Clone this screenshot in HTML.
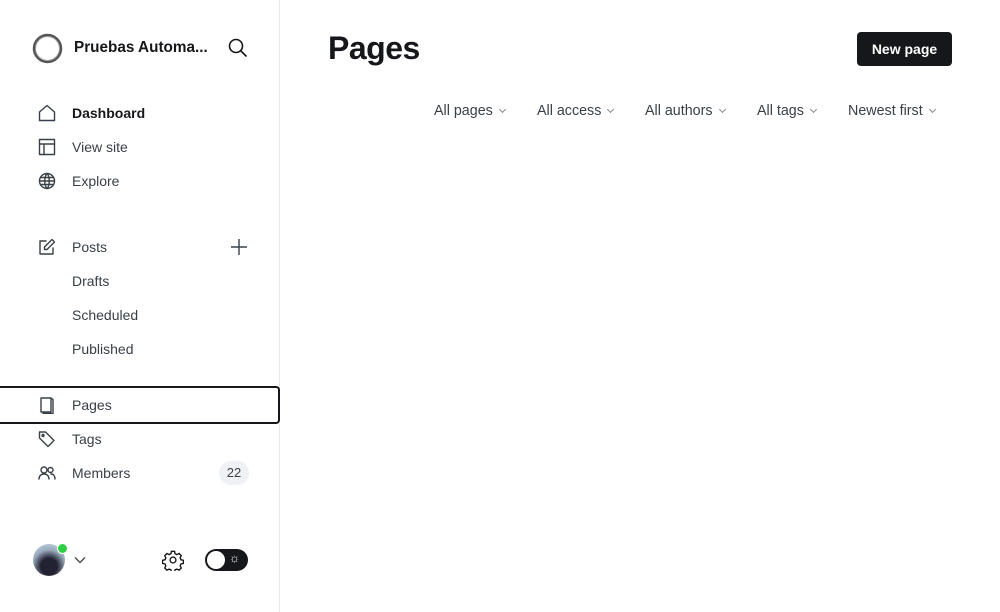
<!DOCTYPE html>
<html><head><meta charset="utf-8"><style>
*{margin:0;padding:0;box-sizing:border-box}
body{width:1000px;height:612px;background:#fff;font-family:"Liberation Sans",sans-serif;position:relative;overflow:hidden;color:#15171a}
.side{position:absolute;left:0;top:0;width:280px;height:612px;border-right:1px solid #e6e8eb}
.t{position:absolute;font-size:14px;color:#394047;white-space:nowrap}
.ic{position:absolute;width:18px;height:18px}
.ic svg{width:18px;height:18px;fill:none;stroke:#394047;stroke-width:1.4;stroke-linecap:round;stroke-linejoin:round}
.f{position:absolute;top:103px;font-size:14.3px;color:#394047;white-space:nowrap}
.f:after{content:"";display:inline-block;width:4px;height:4px;border-right:1px solid #888;border-bottom:1px solid #888;transform:rotate(45deg);margin-left:7px;vertical-align:3px}
</style></head><body>
<div class="side">
<svg style="position:absolute;left:32px;top:33px" width="31" height="31" viewBox="0 0 31 31"><circle cx="15.5" cy="15.5" r="13.5" fill="none" stroke="#555" stroke-width="2.5"/><circle cx="15.5" cy="15.5" r="12" fill="none" stroke="#999" stroke-width="1"/></svg>
<div class="t" style="left:74px;top:39px;font-weight:bold;font-size:15.3px;color:#15171a">Pruebas Automa...</div>
<svg style="position:absolute;left:228px;top:38px" width="20" height="20" viewBox="0 0 20 20" fill="none" stroke="#15171a" stroke-width="1.6"><circle cx="8" cy="8" r="6.5"/><path d="M13 13l5.5 5.5"/></svg>

<div class="ic" style="left:38px;top:104px"><svg viewBox="0 0 18 18"><path d="M1.5 8L9 1.5 16.5 8v8.5h-15z"/></svg></div>
<div class="t" style="left:72px;top:105px;font-weight:bold;color:#15171a">Dashboard</div>
<div class="ic" style="left:38px;top:138px"><svg viewBox="0 0 18 18"><rect x="1.5" y="1.5" width="15" height="15"/><path d="M1.5 6h15M6 6v10.5"/></svg></div>
<div class="t" style="left:72px;top:139px">View site</div>
<div class="ic" style="left:38px;top:172px"><svg viewBox="0 0 18 18"><circle cx="9" cy="9" r="7.5"/><path d="M1.5 9h15M9 1.5c-3 3-3 12 0 15M9 1.5c3 3 3 12 0 15M2.5 5.5h13M2.5 12.5h13"/></svg></div>
<div class="t" style="left:72px;top:173px">Explore</div>

<div class="ic" style="left:38px;top:238px"><svg viewBox="0 0 18 18"><path d="M8 3H2v13h13v-6M14 1.5l2.5 2.5L9 11.5H6.5V9z"/></svg></div>
<div class="t" style="left:72px;top:239px">Posts</div>
<svg style="position:absolute;left:230px;top:238px" width="18" height="18" viewBox="0 0 18 18" stroke="#394047" stroke-width="1.4"><path d="M9 1v16M1 9h16"/></svg>
<div class="t" style="left:72px;top:273px">Drafts</div>
<div class="t" style="left:72px;top:307px">Scheduled</div>
<div class="t" style="left:72px;top:341px">Published</div>

<div style="position:absolute;left:0;top:386px;width:280px;height:38px;border:2px solid #15171a;border-left:none;border-radius:0 4px 4px 0"></div>
<div class="ic" style="left:38px;top:396px"><svg viewBox="0 0 18 18"><path d="M3 2h10v14H3zM13 2l2 1.5v14H5"/></svg></div>
<div class="t" style="left:72px;top:397px">Pages</div>
<div class="ic" style="left:38px;top:430px"><svg viewBox="0 0 18 18"><path d="M1.5 2v6l8.5 8.5 6-6L7.5 2z"/><circle cx="5" cy="5.5" r="1"/></svg></div>
<div class="t" style="left:72px;top:431px">Tags</div>
<div class="ic" style="left:38px;top:464px"><svg viewBox="0 0 18 18"><circle cx="6" cy="6" r="3"/><path d="M1 15c0-3 2-5 5-5s5 2 5 5"/><circle cx="12.5" cy="6" r="2.5"/><path d="M13 10c2.5 0 4 2 4 5"/></svg></div>
<div class="t" style="left:72px;top:465px">Members</div>
<div style="position:absolute;left:219px;top:461px;width:30px;height:24px;border-radius:12px;background:#eff1f4;font-size:13px;color:#394047;text-align:center;line-height:24px">22</div>

<div style="position:absolute;left:33px;top:544px;width:32px;height:32px;border-radius:50%;background:radial-gradient(circle at 50% 70%,#223 0 30%,#9ab 60%,#cde)"></div>
<div style="position:absolute;left:57px;top:543px;width:11px;height:11px;border-radius:50%;background:#30cf43;border:1.5px solid #fff"></div>
<svg style="position:absolute;left:74px;top:556px" width="12" height="8" viewBox="0 0 12 8" fill="none" stroke="#394047" stroke-width="1.3"><path d="M1 1.5l5 5 5-5"/></svg>
<svg style="position:absolute;left:162px;top:549px" width="22" height="22" viewBox="0 0 24 24" fill="none" stroke="#15171a" stroke-width="1.5"><circle cx="12" cy="12" r="3.2"/><path d="M10.3 2.5h3.4l.5 2.6 2 1 2.4-1.2 2.4 2.4-1.2 2.4.9 2 2.7.6v3.4l-2.7.6-.9 2 1.2 2.4-2.4 2.4-2.4-1.2-2 .9-.5 2.7h-3.4l-.5-2.7-2-.9-2.4 1.2-2.4-2.4 1.2-2.4-.9-2-2.7-.6v-3.4l2.7-.6.9-2-1.2-2.4 2.4-2.4 2.4 1.2 2-1z"/></svg>
<div style="position:absolute;left:205px;top:549px;width:43px;height:22px;border-radius:11px;background:#15171a"></div>
<div style="position:absolute;left:207px;top:551px;width:18px;height:18px;border-radius:50%;background:#fff"></div>
<div style="position:absolute;left:229px;top:551px;font-size:12px;color:#fff">☼</div>
</div>

<div style="position:absolute;left:328px;top:30px;font-size:32px;font-weight:bold;letter-spacing:-0.5px;color:#15171a">Pages</div>
<div style="position:absolute;left:857px;top:32px;width:95px;height:34px;background:#15171a;border-radius:4px;color:#fff;font-size:14px;font-weight:bold;text-align:center;line-height:34px">New page</div>
<div class="f" style="left:434px">All pages</div>
<div class="f" style="left:537px">All access</div>
<div class="f" style="left:645px">All authors</div>
<div class="f" style="left:757px">All tags</div>
<div class="f" style="left:848px">Newest first</div>
</body></html>
